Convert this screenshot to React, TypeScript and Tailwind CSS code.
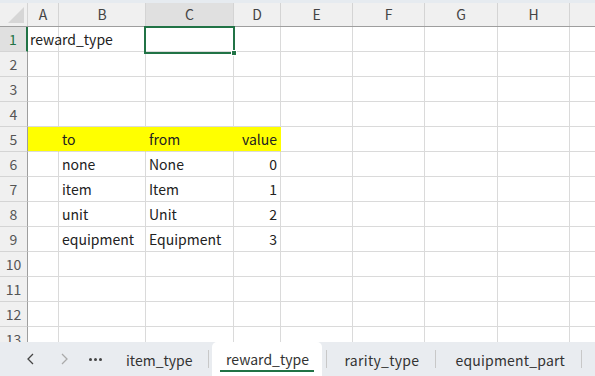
import React from "react";

const colW = [31, 87, 88, 47, 72, 72, 73, 72, 40];
const colLetters = ["A", "B", "C", "D", "E", "F", "G", "H", ""];

type Cell = { t?: string; right?: boolean };
const data: Record<number, Cell[]> = {
  1: [{ t: "reward_type" }],
  5: [{}, { t: "to" }, { t: "from" }, { t: "value", right: true }],
  6: [{}, { t: "none" }, { t: "None" }, { t: "0", right: true }],
  7: [{}, { t: "item" }, { t: "Item" }, { t: "1", right: true }],
  8: [{}, { t: "unit" }, { t: "Unit" }, { t: "2", right: true }],
  9: [{}, { t: "equipment" }, { t: "Equipment" }, { t: "3", right: true }],
};

const font = { fontFamily: '"Noto Sans CJK JP", "Noto Sans", sans-serif' };

export default function App() {
  const rows = Array.from({ length: 13 }, (_, i) => i + 1);
  return (
    <div className="w-[595px] h-[376px] overflow-hidden bg-white flex flex-col" style={font}>
      <div className="h-[3px] bg-[#e6ebf0]" />
      <div className="relative h-[339px] overflow-hidden">
        {/* header row */}
        <div className="flex h-[24px] bg-[#f0f0f0] border-b border-[#9e9e9e]">
          <div className="w-[28px] shrink-0 border-r border-[#d4d4d4] relative">
            <div className="absolute right-[3px] bottom-[3px] w-0 h-0 border-l-[16px] border-l-transparent border-b-[16px] border-b-[#d6d6d6]" />
          </div>
          {colW.map((w, i) => (
            <div
              key={i}
              style={{ width: w }}
              className={`shrink-0 border-r border-[#d4d4d4] flex items-center justify-center text-[14px] text-[#444] ${i === 2 ? "bg-[#e0e0e0]" : ""}`}
            >
              {colLetters[i]}
            </div>
          ))}
        </div>
        {rows.map((r) => (
          <div key={r} className="flex h-[25px]">
            <div
              className={`w-[28px] shrink-0 flex items-center justify-center text-[14px] border-b border-[#d4d4d4] ${
                r === 1 ? "bg-[#e0e0e0] text-[#217346] border-r-2 border-r-[#217346]" : "bg-[#f0f0f0] text-[#555] border-r border-r-[#9e9e9e]"
              }`}
            >
              {r}
            </div>
            {colW.map((w, i) => {
              const c = data[r]?.[i];
              const yellow = r === 5 && i < 4;
              return (
                <div
                  key={i}
                  style={{ width: w }}
                  className={`shrink-0 border-r border-b border-[#dadada] flex items-center text-[14px] text-[#222] whitespace-nowrap ${
                    i === 0 ? "px-[2px]" : "px-[3px]"
                  } ${c?.right ? "justify-end" : ""} ${yellow ? "bg-[#ffff00] border-r-[#ffff00]" : ""} ${
                    r === 1 && i === 0 ? "overflow-visible" : "overflow-hidden"
                  }`}
                >
                  {c?.t && <span className={r === 1 ? "relative z-10" : ""}>{c.t}</span>}
                </div>
              );
            })}
          </div>
        ))}
        {/* selection box on C1 */}
        <div className="absolute left-[144px] top-[23px] w-[91px] h-[28px] border-2 border-[#217346] pointer-events-none">
          <div className="absolute -right-[4px] -bottom-[4px] w-[6px] h-[6px] bg-[#217346] border border-white" />
        </div>
      </div>
      {/* tab bar */}
      <div className="h-[34px] bg-[#e9ecf0] flex items-stretch text-[14px] text-[#333] relative">
        <div className="w-[21px]" />
        <div className="w-[20px] flex items-center justify-center">
          <svg width="10" height="12" viewBox="0 0 10 12"><path d="M7 1 L2 6 L7 11" stroke="#444" strokeWidth="1.3" fill="none" /></svg>
        </div>
        <div className="w-[13px]" />
        <div className="w-[20px] flex items-center justify-center">
          <svg width="10" height="12" viewBox="0 0 10 12"><path d="M3 1 L8 6 L3 11" stroke="#aaa" strokeWidth="1.3" fill="none" /></svg>
        </div>
        <div className="w-[11px]" />
        <div className="w-[20px] flex items-center justify-center gap-[2px]">
          <span className="w-[3px] h-[3px] bg-[#444] rounded-full" />
          <span className="w-[3px] h-[3px] bg-[#444] rounded-full" />
          <span className="w-[3px] h-[3px] bg-[#444] rounded-full" />
        </div>
        <div className="w-[21px]" />
        <div className="flex items-center pr-[16px] pt-[2px]">item_type</div>
        <div className="w-px h-[18px] bg-[#c8c8c8] self-center" />
        <div className="ml-[3px] w-[110px] bg-white rounded-t-[5px] flex flex-col items-center justify-center pt-[2px]">
          <span className="leading-[20px]">reward_type</span>
          <div className="w-[94px] h-[2px] bg-[#217346] mt-[1px]" />
        </div>
        <div className="ml-[4px] w-px h-[18px] bg-[#c8c8c8] self-center" />
        <div className="flex items-center pl-[17px] pr-[16px] pt-[2px] tracking-[0.3px]">rarity_type</div>
        <div className="w-px h-[18px] bg-[#c8c8c8] self-center" />
        <div className="flex items-center pl-[19px] pr-[16px] pt-[2px] tracking-[0.2px]">equipment_part</div>
        <div className="w-px h-[18px] bg-[#c8c8c8] self-center" />
      </div>
    </div>
  );
}
